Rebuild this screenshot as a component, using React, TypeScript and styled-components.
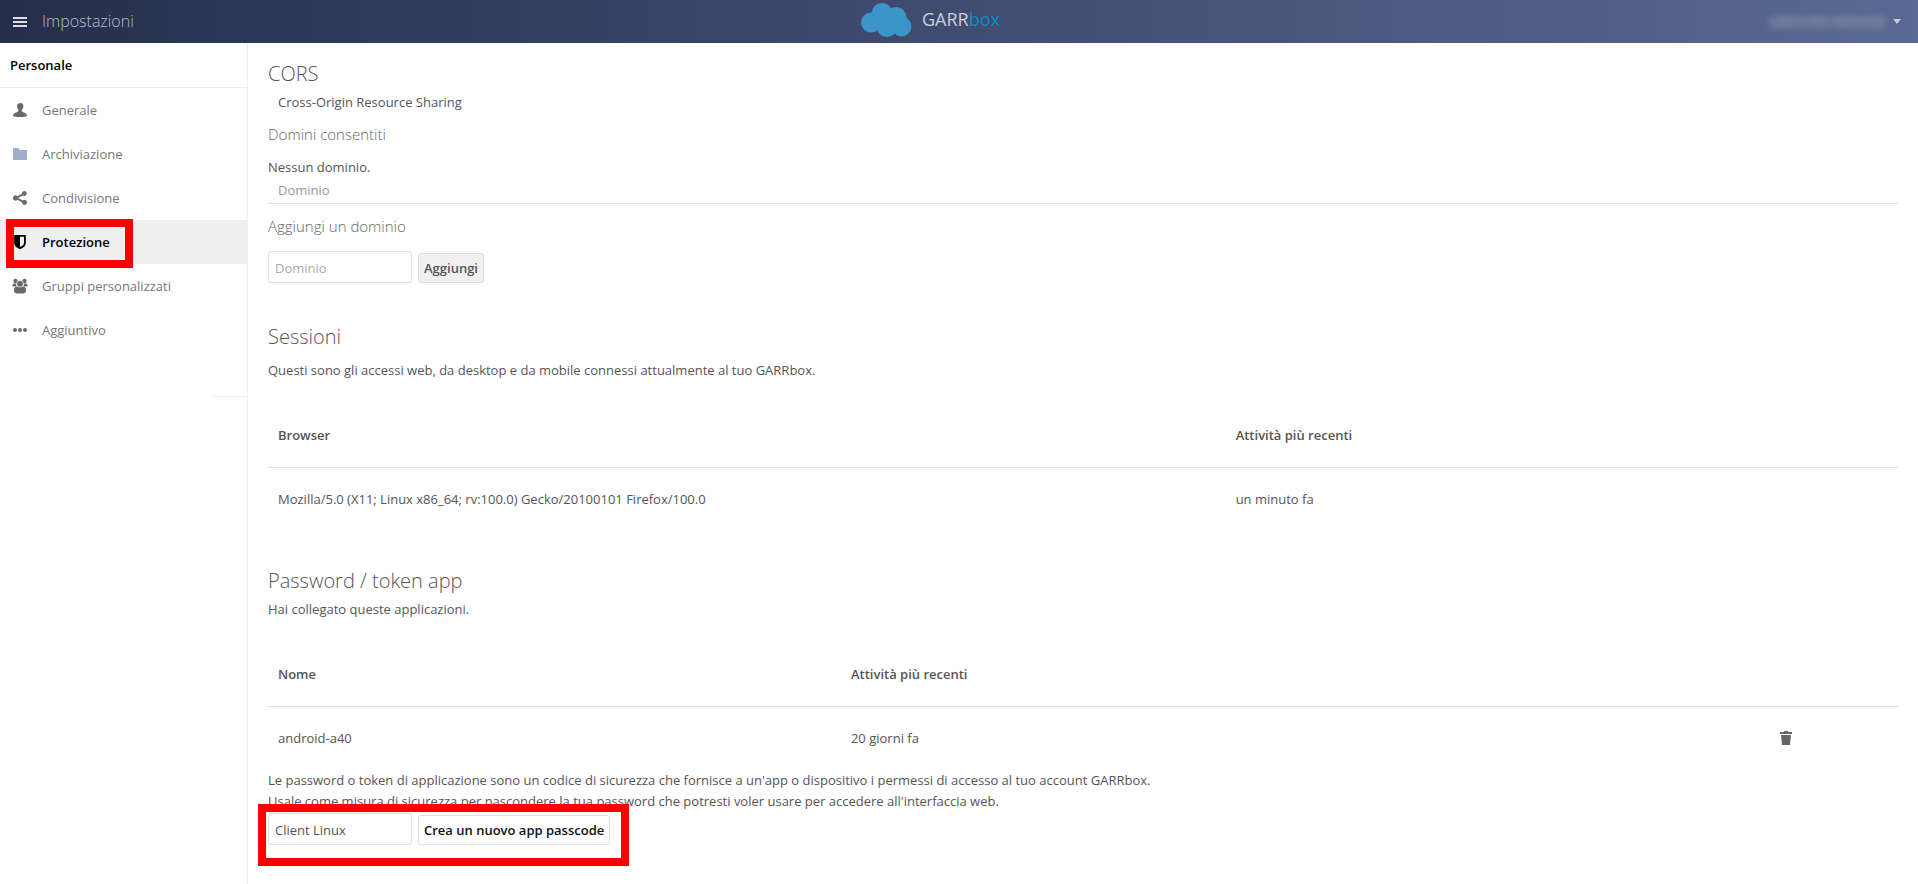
import React, { useState } from 'react';
import styled, { createGlobalStyle, css } from 'styled-components';

const GlobalStyle = createGlobalStyle`
  *, *::before, *::after { box-sizing: border-box; }
  body {
    margin: 0;
    background: #fff;
    color: #555;
    font-family: "Open Sans", "Noto Sans", sans-serif;
    font-size: 13px;
    line-height: 21px;
  }
  button, input { font: inherit; color: inherit; }
`;

const Page = styled.div`
  display: flex;
  flex-direction: column;
  min-height: 100vh;
`;

const Header = styled.header`
  display: grid;
  grid-template-columns: 1fr auto 1fr;
  align-items: center;
  height: 43px;
  background: linear-gradient(90deg, #252e4c 0%, #404c70 50%, #5a6994 100%);
  color: #fff;
`;

const MenuButton = styled.button`
  display: flex;
  align-items: center;
  gap: 15px;
  justify-self: start;
  padding: 0 13px;
  border: 0;
  background: none;
  color: #b9bdc8;
  font-size: 16px;
  font-weight: 300;
  cursor: pointer;
`;

const Brand = styled.a`
  display: flex;
  align-items: center;
  align-self: start;
  gap: 10px;
  height: 39px;
  padding-right: 58px;
  color: #cdd1dc;
  font-size: 18px;
  text-decoration: none;
`;

const BrandAccent = styled.span`
  color: #0f8fc4;
`;

const UserButton = styled.button`
  display: flex;
  align-items: center;
  gap: 8px;
  justify-self: end;
  padding: 0 17px 0 0;
  border: 0;
  background: none;
  cursor: pointer;
`;

const HiddenName = styled.span`
  width: 116px;
  height: 12px;
  background: linear-gradient(90deg, #7f89a6, #8d96ae 12%, #7f89a6 30%, #8a93ac 45%, #76819f 52%, #8d96ae 62%, #808aa6 80%, #8d96ae);
  opacity: 0.5;
  filter: blur(3px);
`;

const Body = styled.div`
  display: flex;
  flex: 1;
`;

const Sidebar = styled.aside`
  position: relative;
  flex: 0 0 248px;
  border-right: 1px solid #eee;
`;

const SidebarTitle = styled.h2`
  margin: 0;
  padding: 12px 10px 11px;
  border-bottom: 1px solid #eee;
  color: #000;
  font-size: 13px;
  font-weight: 600;
`;

const NavList = styled.ul`
  margin: 0;
  padding: 0;
  list-style: none;
`;

const NavLink = styled.a<{ $active?: boolean }>`
  display: flex;
  align-items: center;
  gap: 14px;
  height: 44px;
  padding: 0 12px;
  color: #777;
  text-decoration: none;
  svg { fill: #6a6a6a; }
  ${(p) => p.$active && css`
    margin-right: -1px;
    background: #efefef;
    color: #000;
    font-weight: 600;
    svg { fill: #000; }
  `}
`;

const SidebarRule = styled.hr`
  width: 34px;
  margin: 44px 0 0 auto;
  border: 0;
  border-top: 1px solid #eee;
`;

const Highlight = styled.div`
  position: absolute;
  border: 8px solid #f00;
  pointer-events: none;
`;

const NavHighlight = styled(Highlight)`
  top: 176px;
  left: 6px;
  width: 127px;
  height: 49px;
`;

const FormHighlight = styled(Highlight)`
  top: -9px;
  left: -10px;
  right: -19px;
  height: 62px;
`;

const Content = styled.main`
  flex: 1;
  min-width: 0;
  padding: 17px 20px 0;
`;

const Section = styled.section<{ $gap: number }>`
  margin-bottom: ${(p) => p.$gap}px;
`;

const Heading = styled.h2`
  margin: 0;
  font-size: 20px;
  font-weight: 300;
  line-height: 28px;
`;

const SubHeading = styled.h3<{ $top?: number; $bottom?: number }>`
  margin: ${(p) => p.$top ?? 0}px 0 ${(p) => p.$bottom ?? 0}px;
  color: #666;
  font-size: 15px;
  font-weight: 300;
  line-height: 22px;
`;

const Text = styled.p<{ $inset?: boolean; $top?: number; $bottom?: number }>`
  margin: ${(p) => p.$top ?? 0}px 0 ${(p) => p.$bottom ?? 0}px;
  padding-left: ${(p) => (p.$inset ? 10 : 0)}px;
`;

const Table = styled.table<{ $compact?: boolean }>`
  width: 100%;
  table-layout: fixed;
  border-collapse: collapse;
  text-align: left;
  th {
    height: ${(p) => (p.$compact ? 25 : 63)}px;
    padding: 0 10px;
    border-bottom: 1px solid #ddd;
    font-weight: ${(p) => (p.$compact ? 400 : 600)};
    color: ${(p) => (p.$compact ? '#999' : '#555')};
  }
  td { height: 63px; padding: 0 10px; }
`;

const Col = styled.col<{ $share: number }>`
  width: ${(p) => p.$share}%;
`;

const IconButton = styled.button`
  display: flex;
  padding: 0;
  border: 0;
  background: none;
  cursor: pointer;
`;

const Form = styled.form`
  position: relative;
  display: flex;
  align-items: flex-end;
  gap: 6px;
  width: fit-content;
`;

const TextField = styled.input`
  width: 144px;
  height: 32px;
  padding: 2px 6px 0;
  border: 1px solid #ddd;
  border-radius: 3px;
  background: #fff;
  outline: none;
  &::placeholder { color: #aaa; opacity: 1; }
`;

const Button = styled.button<{ $plain?: boolean }>`
  height: 30px;
  padding: 1px 5px 0;
  border: 1px solid #ddd;
  border-radius: 3px;
  background: ${(p) => (p.$plain ? '#fff' : '#f0f0f0')};
  color: ${(p) => (p.$plain ? '#111' : '#555')};
  font-weight: 600;
  white-space: nowrap;
  cursor: pointer;
`;

const Icon = ({ children }: { children: React.ReactNode }) => (
  <svg width="16" height="16" viewBox="0 0 16 16" aria-hidden="true">{children}</svg>
);

const icons = {
  user: <path d="M8.400 1C6.600 1 5 2 5 4c0 1.300.4 2.500 1.200 3.500.3.500.3 1.200.1 1.800C5.800 10.600 1 10.800 1 13.800 1 14.700 4 15 8 15s7-.3 7-1.200c0-3-4.400-3.200-5.100-4.500-.2-.6-.1-1.300.2-1.800C10.800 6.500 11.500 5.300 11.500 4c0-2-1.400-3-3.100-3z" />,
  folder: <path d="M1 2h5l2 2h7v10H1z" style={{ fill: '#9fafc9' }} />,
  share: <path d="M12.500 1A2.500 2.500 0 0 0 10 3.800L5.200 6.200a2.500 2.500 0 1 0 0 3.600L10 12.200a2.500 2.500 0 1 0 .9-1.800L6 8l4.900-2.400A2.500 2.500 0 1 0 12.500 1z" />,
  shield: <path fillRule="evenodd" d="M2.200 1h11.600v8.200c0 3-3 4.900-5.800 5.800-2.800-.9-5.800-2.800-5.800-5.800zM8 2.700v10.400c2-.8 4-2.100 4-4V2.700z" />,
  group: (
    <>
      <circle cx="3.500" cy="3" r="2.200" />
      <circle cx="12.500" cy="3" r="2.200" />
      <path d="M2 5.600C.9 5.600.4 6.700.4 8.600h3.800V5.600zM14 5.600c1.100 0 1.600 1.100 1.600 3h-3.800V5.600z" />
      <path d="M5 8.400h6c2 0 3 1.500 3 4.200 0 1.900-1 2.800-2.600 2.800H4.600C3 15.400 2 14.500 2 12.600c0-2.700 1-4.200 3-4.200z" />
      <circle cx="8" cy="5.800" r="3.400" stroke="#fff" strokeWidth=".6" />
    </>
  ),
  more: <><circle cx="3" cy="8" r="2" /><circle cx="8" cy="8" r="2" /><circle cx="13" cy="8" r="2" /></>,
};

const navItems: { label: string; icon: keyof typeof icons; active?: boolean }[] = [
  { label: 'Generale', icon: 'user' },
  { label: 'Archiviazione', icon: 'folder' },
  { label: 'Condivisione', icon: 'share' },
  { label: 'Protezione', icon: 'shield', active: true },
  { label: 'Gruppi personalizzati', icon: 'group' },
  { label: 'Aggiuntivo', icon: 'more' },
];

export default function App() {
  const [domain, setDomain] = useState('');
  const [appName, setAppName] = useState('Client Linux');

  return (
    <Page>
      <GlobalStyle />
      <Header>
        <MenuButton type="button">
          <svg width="14" height="10" viewBox="0 0 14 10" fill="#dcdee4" aria-hidden="true">
            <path d="M0 0h14v2H0zM0 4h14v2H0zM0 8h14v2H0z" />
          </svg>
          Impostazioni
        </MenuButton>
        <Brand href="#">
          <svg width="52" height="35" viewBox="0 0 52 35" fill="#3c94c8" aria-hidden="true">
            <circle cx="11" cy="20.500" r="10" />
            <circle cx="22" cy="11.500" r="10.500" />
            <circle cx="36" cy="15.500" r="10.500" />
            <circle cx="41.500" cy="24.500" r="10" />
            <circle cx="27" cy="24.500" r="10.500" />
            <path d="M10 12h28v16H18z" />
          </svg>
          <span>GARR<BrandAccent>box</BrandAccent></span>
        </Brand>
        <UserButton type="button" aria-label="Menu utente">
          <HiddenName />
          <svg width="8" height="5" viewBox="0 0 8 5" fill="#ccc" aria-hidden="true"><path d="M0 0h8L4 5z" /></svg>
        </UserButton>
      </Header>
      <Body>
        <Sidebar>
          <SidebarTitle>Personale</SidebarTitle>
          <nav>
            <NavList>
              {navItems.map((item) => (
                <li key={item.label}>
                  <NavLink href="#" $active={item.active}>
                    <Icon>{icons[item.icon]}</Icon>
                    {item.label}
                  </NavLink>
                </li>
              ))}
            </NavList>
          </nav>
          <SidebarRule />
          <NavHighlight />
        </Sidebar>
        <Content>
          <Section $gap={40}>
            <Heading>CORS</Heading>
            <Text $inset $top={4} $bottom={10}>Cross-Origin Resource Sharing</Text>
            <SubHeading>Domini consentiti</SubHeading>
            <Text $top={12}>Nessun dominio.</Text>
            <Table $compact>
              <thead><tr><th>Dominio</th></tr></thead>
            </Table>
            <SubHeading $top={11} $bottom={14}>Aggiungi un dominio</SubHeading>
            <Form onSubmit={(e) => e.preventDefault()}>
              <TextField aria-label="Dominio" placeholder="Dominio" value={domain} onChange={(e) => setDomain(e.target.value)} />
              <Button type="submit">Aggiungi</Button>
            </Form>
          </Section>
          <Section $gap={36}>
            <Heading>Sessioni</Heading>
            <Text $top={9} $bottom={24}>
              Questi sono gli accessi web, da desktop e da mobile connessi attualmente al tuo GARRbox.
            </Text>
            <Table>
              <colgroup><Col $share={58.75} /><Col $share={41.25} /></colgroup>
              <thead><tr><th>Browser</th><th>Attività più recenti</th></tr></thead>
              <tbody>
                <tr>
                  <td>Mozilla/5.0 (X11; Linux x86_64; rv:100.0) Gecko/20100101 Firefox/100.0</td>
                  <td>un minuto fa</td>
                </tr>
              </tbody>
            </Table>
          </Section>
          <Section $gap={0}>
            <Heading>Password / token app</Heading>
            <Text $top={4} $bottom={24}>Hai collegato queste applicazioni.</Text>
            <Table>
              <colgroup><Col $share={35.15} /><Col $share={57} /><Col $share={7.85} /></colgroup>
              <thead><tr><th>Nome</th><th>Attività più recenti</th><th /></tr></thead>
              <tbody>
                <tr>
                  <td>android-a40</td>
                  <td>20 giorni fa</td>
                  <td>
                    <IconButton type="button" aria-label="Elimina">
                      <svg width="12" height="14" viewBox="0 0 12 14" fill="#666" aria-hidden="true">
                        <path d="M4 0h4v1h4v2H0V1h4zM1 4h10l-1 10H2z" />
                      </svg>
                    </IconButton>
                  </td>
                </tr>
              </tbody>
            </Table>
            <Text $bottom={1}>
              Le password o token di applicazione sono un codice di sicurezza che fornisce a un'app o dispositivo i permessi di accesso al tuo account GARRbox.
              <br />
              Usale come misura di sicurezza per nascondere la tua password che potresti voler usare per accedere all'interfaccia web.
            </Text>
            <Form onSubmit={(e) => e.preventDefault()}>
              <TextField aria-label="Nome dell'app" value={appName} onChange={(e) => setAppName(e.target.value)} />
              <Button type="submit" $plain>Crea un nuovo app passcode</Button>
              <FormHighlight />
            </Form>
          </Section>
        </Content>
      </Body>
    </Page>
  );
}
